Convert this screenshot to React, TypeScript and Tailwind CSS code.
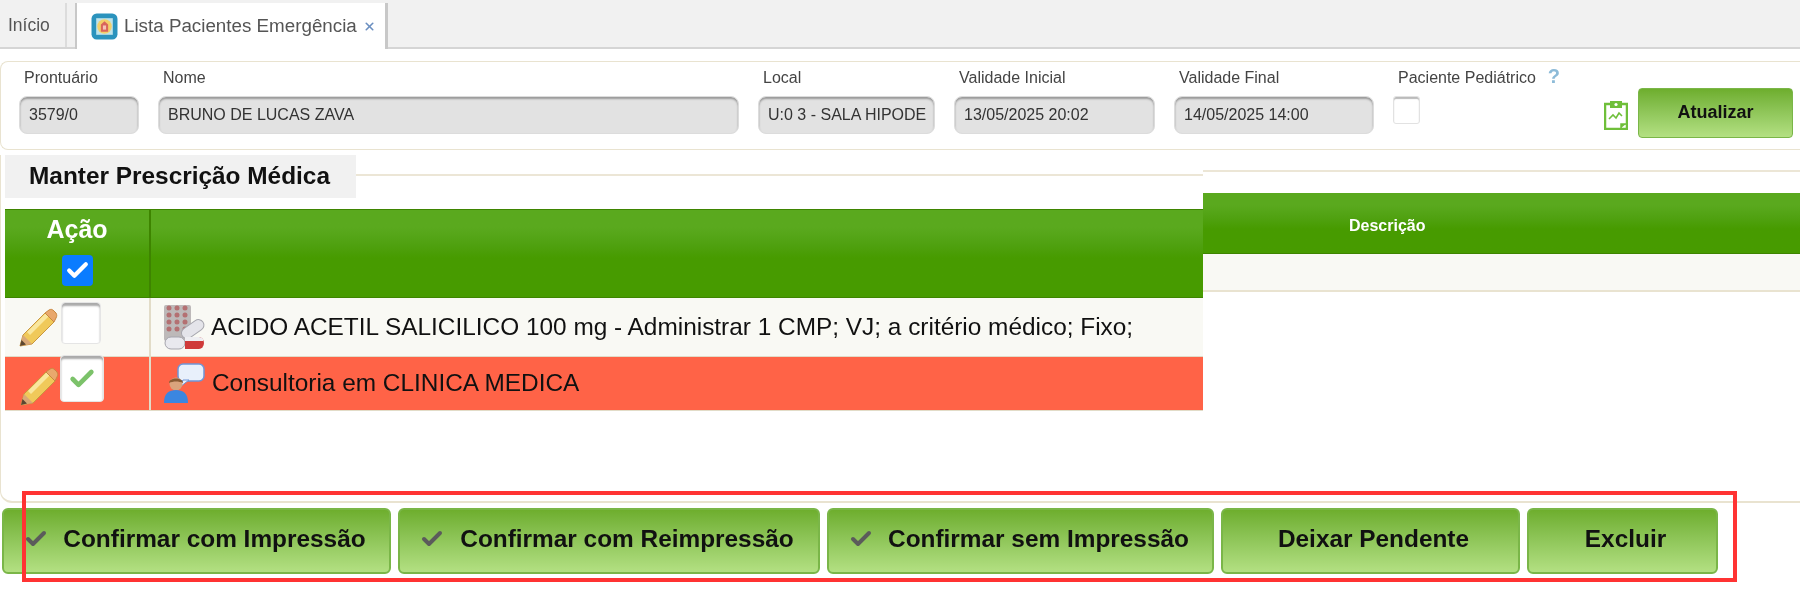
import { Check, X } from "lucide-react";

const campos = [
  { label: "Prontuário", valor: "3579/0", w: "w-[120px]" },
  { label: "Nome", valor: "BRUNO DE LUCAS ZAVA", w: "w-[581px]" },
  { label: "Local", valor: "U:0 3 - SALA HIPODE", w: "w-[177px]" },
  { label: "Validade Inicial", valor: "13/05/2025 20:02", w: "w-[201px]" },
  { label: "Validade Final", valor: "14/05/2025 14:00", w: "w-[200px]" },
];

const botoes = [
  { texto: "Confirmar com Impressão", w: "w-[389px]", margem: "ml-[36px]", icone: true },
  { texto: "Confirmar com Reimpressão", w: "w-[422px]", margem: "ml-[36px]", icone: true },
  { texto: "Confirmar sem Impressão", w: "w-[387px]", margem: "ml-[36px]", icone: true },
  { texto: "Deixar Pendente", w: "w-[299px]", margem: "ml-[6px]", icone: false },
  { texto: "Excluir", w: "w-[191px]", margem: "ml-[6px]", icone: false },
];

function TabIcon() {
  return (
    <svg width="27" height="27" viewBox="0 0 26 26">
      <rect x="0.5" y="0.5" width="25" height="25" rx="5" fill="#2b93bd" />
      <path d="M5 5h16v16H5z" fill="#bfe3ea" />
      <circle cx="13" cy="13" r="7" fill="#f3d06a" />
      <path d="M9.5 18v-7l3.5-3 3.5 3v7z" fill="#d9655b" />
      <rect x="11.5" y="12" width="3" height="4" fill="#f6c2b5" />
    </svg>
  );
}

function PrancheIcon() {
  return (
    <svg width="24" height="30" viewBox="0 0 24 30" fill="none">
      <path d="M1 4h22v25H1z" fill="#fff" stroke="#6fbf3a" strokeWidth="2.5" />
      <rect x="6" y="1" width="12" height="7" fill="#6fbf3a" />
      <circle cx="12" cy="4.5" r="1.6" fill="#fff" />
      <path d="M5 19l4-4 3 3 3-5 3 3" stroke="#6fbf3a" strokeWidth="1.6" />
      <path d="M17 28v-4h5" fill="#6fbf3a" stroke="#6fbf3a" strokeWidth="1.5" />
    </svg>
  );
}

function LapisIcon() {
  return (
    <svg width="40" height="40" viewBox="0 0 40 40">
      <path d="M1 38l3-11L26 5l9 9-22 22z" fill="#f0c95a" stroke="#c9973f" strokeWidth="1" />
      <path d="M8 24L29 3l3 3L11 27z" fill="#f9e79f" />
      <path d="M26 5l4-3c2-1 3-1 5 1l2 2c1 2 1 3 0 5l-2 4z" fill="#e9a86d" stroke="#c9873f" strokeWidth="1" />
      <path d="M1 38l3-11 9 9z" fill="#d9a877" />
      <path d="M1 38l1.500-6 4.500 4.500z" fill="#5b4630" />
    </svg>
  );
}

function RemedioIcon() {
  return (
    <svg width="42" height="46" viewBox="0 0 42 46">
      <rect x="1" y="1" width="27" height="36" rx="2" fill="#bdb9b9" />
      {[2, 9, 16, 23].map((y) =>
        [6, 14, 22].map((x) => <circle key={`${x}-${y}`} cx={x} cy={y + 2} r="2.500" fill="#b47072" />),
      )}
      <rect x="17" y="20" width="25" height="11" rx="5.500" transform="rotate(-35 29 25)" fill="#e4e4ea" stroke="#a5a5ad" />
      <rect x="2" y="33" width="20" height="12" rx="6" fill="#e9e9ee" stroke="#a5a5ad" />
      <path d="M22 33h14a5 6 0 0 1 0 12H22z" fill="#cf3a3a" />
      <path d="M22 33h14a5 3 0 0 1 4 4H22z" fill="#eeeef2" />
    </svg>
  );
}

function ConsultoriaIcon() {
  return (
    <svg width="42" height="42" viewBox="0 0 42 42">
      <rect x="15" y="1" width="26" height="17" rx="5" fill="#e8f0fb" stroke="#6f95d8" strokeWidth="1.500" />
      <path d="M20 17l-3 7 9-7z" fill="#e8f0fb" stroke="#6f95d8" />
      <circle cx="13" cy="21" r="6.500" fill="#d9a37c" />
      <path d="M6 20c0-6 14-6 14 0-4-2-10-2-14 0z" fill="#8a5a32" />
      <path d="M1 40c0-10 5-13 12-13s12 3 12 13z" fill="#3b86e0" />
    </svg>
  );
}

export default function App() {
  return (
    <div className="relative h-[593px] w-[1800px] overflow-hidden bg-white font-['Liberation_Sans'] text-[#222] blur-[0.5px]">
      {/* Abas */}
      <div className="flex h-[49px] items-end gap-[8px] border-b-2 border-[#d5d5d5] bg-[#f1f1f1]">
        <div className="flex h-[44px] w-[67px] items-center border-r-2 border-[#dcdcdc] pl-[8px] text-[17.500px] text-[#555]">
          Início
        </div>
        <div className="-mb-[2px] flex h-[46px] w-[313px] items-center gap-[6px] border-r-[3px] border-l-2 border-[#c8c8c8] bg-white pl-[14px] text-[18.800px] whitespace-nowrap text-[#555]">
          <TabIcon />
          <span>Lista Pacientes Emergência</span>
          <X size={13} strokeWidth={3} className="ml-0 shrink-0 text-[#6b8fc0]" />
        </div>
      </div>

      {/* Filtros */}
      <div className="mt-[12px] flex h-[89px] items-start rounded-l-lg border border-r-0 border-[#e9e3d0] pl-[18px]">
        <div className="flex gap-[19px] pt-[4px]">
          {campos.map((c) => (
            <div key={c.label} className={c.w}>
              <div className="ml-[5px] h-[30px] text-[16px] leading-[24px] text-[#444]">{c.label}</div>
              <div className="flex h-[38px] items-center overflow-hidden rounded-lg border border-[#dcdcdc] bg-[#e2e2e2] px-[9px] text-[16px] whitespace-nowrap text-[#333] shadow-[inset_0_2px_2px_#999]">
                {c.valor}
              </div>
            </div>
          ))}
        </div>
        <div className="ml-[19px] w-[212px] pt-[4px]">
          <div className="ml-[5px] flex h-[30px] items-start gap-[12px] text-[16px] leading-[24px] text-[#444]">
            Paciente Pediátrico
            <span className="text-[20px] leading-[20px] font-bold text-[#8dbbd8]">?</span>
          </div>
          <div className="h-[28px] w-[27px] rounded-[3px] border border-[#e2e2e2] bg-white shadow-[inset_0_2px_1px_#bbb]" />
        </div>
        <div className="mt-[38px] -ml-[1px]">
          <PrancheIcon />
        </div>
        <button className="mt-[26px] ml-[10px] h-[50px] w-[155px] rounded-[4px] border border-[#7ab648] bg-gradient-to-b from-[#6eae2d] to-[#b3e082] pb-[2px] text-[18px] font-bold text-[#111]">
          Atualizar
        </button>
      </div>

      {/* Prescrição */}
      <div className="mt-[5px] flex h-[348px] rounded-bl-xl border-b-2 border-l border-[#e9e3d0]">
        <div className="w-[1202px] pl-[4px]">
          <div className="flex items-start">
            <div className="flex h-[43px] w-[351px] items-center bg-[#f1f1f1] pl-[24px] text-[24.400px] font-bold whitespace-nowrap text-[#111]">
              Manter Prescrição Médica
            </div>
            <div className="mt-[19px] flex-1 border-t-2 border-[#ece6d6]" />
          </div>
          <div className="mt-[11px]">
            <div className="flex h-[89px] border-y border-[#3e8400] bg-gradient-to-b from-[#5aa91e] from-20% to-[#479b00] to-55%">
              <div className="flex w-[146px] flex-col items-center border-r-2 border-[#3e8400] pt-[3px] text-[25px] leading-[32px] font-bold text-white">
                Ação
                <span className="mt-[10px] flex h-[31px] w-[31px] items-center justify-center rounded-[4px] bg-[#0a7cff]">
                  <Check size={25} strokeWidth={4} className="text-white" />
                </span>
              </div>
              <div className="flex-1" />
            </div>
            <div className="flex h-[59px] border-b border-[#e2dcc8] bg-[#f9f9f4]">
              <div className="flex w-[146px] items-start border-r-2 border-[#e2dcc8] pt-[4px] pl-[14px]">
                <div className="mt-[6px]">
                  <LapisIcon />
                </div>
                <span className="ml-[2px] h-[42px] w-[40px] rounded-[4px] border border-[#e5e5e5] bg-white shadow-[inset_0_3px_2px_#aaa]" />
              </div>
              <div className="flex flex-1 items-center gap-[6px] pl-[12px] text-[24.400px] whitespace-nowrap text-[#111]">
                <RemedioIcon />
                ACIDO ACETIL SALICILICO 100 mg - Administrar 1 CMP; VJ; a critério médico; Fixo;
              </div>
            </div>
            <div className="flex h-[54px] border-b border-[#e2dcc8] bg-[#ff6347]">
              <div className="flex w-[146px] items-start border-r-2 border-[#e2dcc8] pl-[15px]">
                <div className="mt-[10px]">
                  <LapisIcon />
                </div>
                <span className="-mt-[2px] flex h-[47px] w-[44px] items-center justify-center rounded-[4px] border border-[#e5e5e5] bg-white shadow-[inset_0_3px_2px_#aaa]">
                  <Check size={28} strokeWidth={4} className="text-[#7cc26a]" />
                </span>
              </div>
              <div className="flex flex-1 items-center gap-[7px] pl-[12px] text-[24.400px] whitespace-nowrap text-[#111]">
                <ConsultoriaIcon />
                Consultoria em CLINICA MEDICA
              </div>
            </div>
          </div>
        </div>
        <div className="flex-1">
          <div className="mt-[15px] border-t-2 border-[#ece6d6]" />
          <div className="mt-[21px] flex h-[61px] items-center border-b border-[#3e8400] bg-gradient-to-b from-[#5aa91e] from-20% to-[#479b00] to-60% pt-[6px] pl-[146px] text-[16px] font-bold text-white">
            Descrição
          </div>
          <div className="h-[38px] border-b-2 border-[#e9e3d0] bg-[#f9f9f4]" />
        </div>
      </div>

      {/* Ações */}
      <div className="mt-[5px] flex gap-[7px] pl-[2px]">
        {botoes.map((b) => (
          <button
            key={b.texto}
            className={`relative flex h-[66px] items-center justify-center rounded-[6px] border-2 border-[#7ab648] bg-gradient-to-b from-[#6eae2d] to-[#b3e082] pb-[4px] text-[24.400px] font-bold whitespace-nowrap text-[#111] ${b.w}`}
          >
            {b.icone && (
              <Check size={24} strokeWidth={4} className="absolute left-[20px] text-[#5b5b5b]" />
            )}
            <span className={b.margem}>{b.texto}</span>
          </button>
        ))}
      </div>

      {/* Destaque vermelho */}
      <div className="absolute top-[491px] left-[22px] h-[91px] w-[1715px] border-4 border-[#ff3333]" />
    </div>
  );
}
